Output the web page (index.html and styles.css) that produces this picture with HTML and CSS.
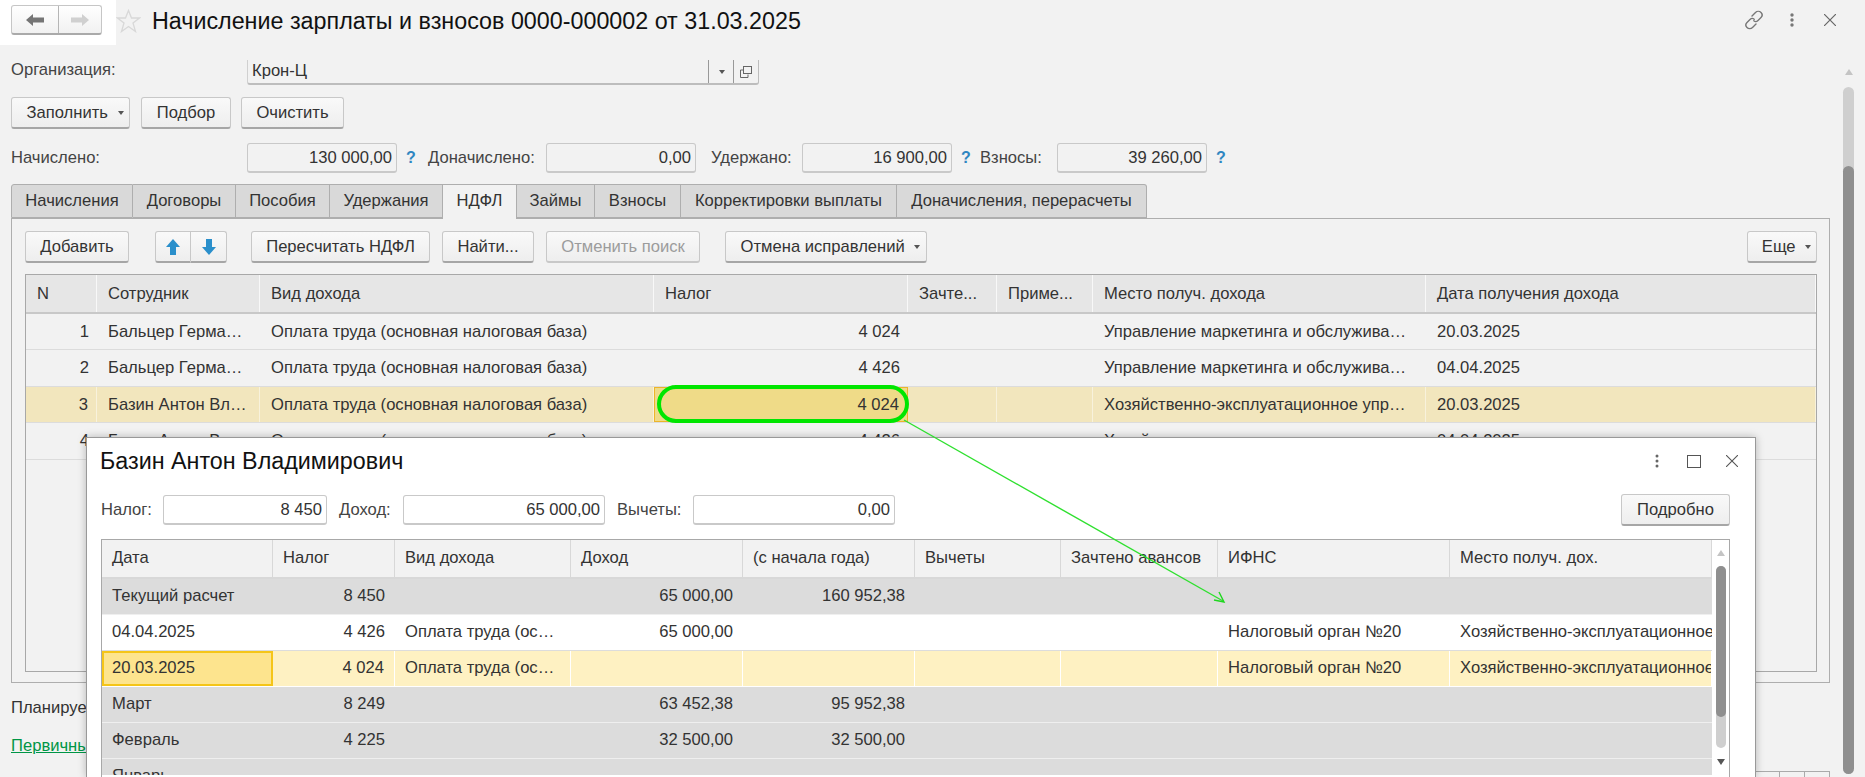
FILE: index.html
```html
<!DOCTYPE html>
<html>
<head>
    <meta charset="UTF-8">
    <title>Начисление зарплаты и взносов</title>
    <link rel="stylesheet" href="styles.css">
</head>
<body>
<div class="page">
    <div class="main">
        <div class="title-bar">
            <div class="nav-box">
                <div class="nav-buttons">
                    <div class="nav-btn">
                        <svg width="18" height="12" viewBox="0 0 18 12"><path d="M0 6 7 0V3.500H18V8.500H7V12Z" fill="#757575"/></svg>
                    </div>
                    <div class="nav-btn nav-next">
                        <svg width="18" height="12" viewBox="0 0 18 12"><path d="M18 6 11 0V3.500H0V8.500H11V12Z" fill="#d0d0d0"/></svg>
                    </div>
                </div>
            </div>
            <svg class="star" width="25" height="24" viewBox="0 0 25 24"><path d="M12.500 1.500 15.500 9H23.500L17 14 19.500 22.500 12.500 17.500 5.500 22.500 8 14 1.500 9H9.500Z" fill="none" stroke="#d8d8d8" stroke-width="1.300"/></svg>
            <h1 class="doc-title">Начисление зарплаты и взносов 0000-000002 от 31.03.2025</h1>
            <div class="title-icons">
                <svg width="20" height="20" viewBox="0 0 20 20" fill="none" stroke="#777" stroke-width="1.400" stroke-linecap="round"><path d="M8 6 11.500 2.500C13 1 15.500 1 17 2.500S18.500 6 17 7.500L14 10.500C12.800 11.700 11 11.800 9.800 10.800"/><path d="M12 14 8.500 17.500C7 19 4.500 19 3 17.500S1.500 14 3 12.500L6 9.500C7.200 8.300 9 8.200 10.200 9.200"/></svg>
                <svg class="icon-dots" width="4" height="14" viewBox="0 0 4 14" fill="#777"><circle cx="2" cy="2" r="1.700"/><circle cx="2" cy="7" r="1.700"/><circle cx="2" cy="12" r="1.700"/></svg>
                <svg class="icon-close" width="12" height="12" viewBox="0 0 12 12" stroke="#666" stroke-width="1.200"><path d="M0 0 12 12M12 0 0 12"/></svg>
            </div>
        </div>

        <div class="content">
            <div class="org-row">
                <label class="org-label">Организация:</label>
                <div class="org-field">
                    <span class="org-value">Крон-Ц</span>
                    <span class="org-btn"><i class="caret"></i></span>
                    <span class="org-btn">
                        <svg width="12" height="12" viewBox="0 0 12 12" fill="none" stroke="#666"><rect x="3.500" y="0.500" width="8" height="7"/><path d="M3 4H0.500V11.500H8V8.500"/></svg>
                    </span>
                </div>
            </div>

            <div class="btn-row">
                <button class="btn btn-menu btn-fill">Заполнить <i class="caret"></i></button>
                <button class="btn btn-pick">Подбор</button>
                <button class="btn btn-clear">Очистить</button>
            </div>

            <div class="sum-row">
                <label class="sum-first">Начислено:</label>
                <div class="field sum-field">130 000,00</div>
                <span class="help">?</span>
                <label class="sum-extra">Доначислено:</label>
                <div class="field sum-field">0,00</div>
                <label class="sum-held">Удержано:</label>
                <div class="field sum-field">16 900,00</div>
                <span class="help">?</span>
                <label class="sum-fee">Взносы:</label>
                <div class="field sum-field">39 260,00</div>
                <span class="help">?</span>
            </div>

            <div class="tabs">
                <div class="tab tab-1">Начисления</div>
                <div class="tab tab-2">Договоры</div>
                <div class="tab tab-3">Пособия</div>
                <div class="tab tab-4">Удержания</div>
                <div class="tab tab-5 active">НДФЛ</div>
                <div class="tab tab-6">Займы</div>
                <div class="tab tab-7">Взносы</div>
                <div class="tab tab-8">Корректировки выплаты</div>
                <div class="tab tab-9">Доначисления, перерасчеты</div>
            </div>

            <div class="panel">
                <div class="toolbar">
                    <button class="btn tb-add">Добавить</button>
                    <div class="arrow-group">
                        <button class="btn arrow-btn">
                            <svg width="14" height="16" viewBox="0 0 14 16"><path d="M7 0 14 8H10V16H4V8H0Z" fill="#2a8fcb"/></svg>
                        </button>
                        <button class="btn arrow-btn">
                            <svg width="14" height="16" viewBox="0 0 14 16"><path d="M7 16 14 8H10V0H4V8H0Z" fill="#2a8fcb"/></svg>
                        </button>
                    </div>
                    <button class="btn tb-recalc">Пересчитать НДФЛ</button>
                    <button class="btn tb-find">Найти...</button>
                    <button class="btn tb-cancel" disabled>Отменить поиск</button>
                    <button class="btn btn-menu tb-fix">Отмена исправлений <i class="caret"></i></button>
                    <button class="btn btn-menu tb-more">Еще <i class="caret"></i></button>
                </div>

                <div class="grid main-grid">
                    <div class="grid-row grid-head">
                        <div class="cell">N</div>
                        <div class="cell">Сотрудник</div>
                        <div class="cell">Вид дохода</div>
                        <div class="cell">Налог</div>
                        <div class="cell">Зачте...</div>
                        <div class="cell">Приме...</div>
                        <div class="cell">Место получ. дохода</div>
                        <div class="cell">Дата получения дохода</div>
                    </div>
                    <div class="grid-row">
                        <div class="cell num">1</div>
                        <div class="cell">Бальцер Герман Иванович</div>
                        <div class="cell">Оплата труда (основная налоговая база)</div>
                        <div class="cell num">4 024</div>
                        <div class="cell"></div>
                        <div class="cell"></div>
                        <div class="cell">Управление маркетинга и обслуживания клиентов</div>
                        <div class="cell">20.03.2025</div>
                    </div>
                    <div class="grid-row">
                        <div class="cell num">2</div>
                        <div class="cell">Бальцер Герман Иванович</div>
                        <div class="cell">Оплата труда (основная налоговая база)</div>
                        <div class="cell num">4 426</div>
                        <div class="cell"></div>
                        <div class="cell"></div>
                        <div class="cell">Управление маркетинга и обслуживания клиентов</div>
                        <div class="cell">04.04.2025</div>
                    </div>
                    <div class="grid-row row-current">
                        <div class="cell num">3</div>
                        <div class="cell">Базин Антон Владимирович</div>
                        <div class="cell">Оплата труда (основная налоговая база)</div>
                        <div class="cell num cell-current">4 024</div>
                        <div class="cell"></div>
                        <div class="cell"></div>
                        <div class="cell">Хозяйственно-эксплуатационное управление</div>
                        <div class="cell">20.03.2025</div>
                    </div>
                    <div class="grid-row">
                        <div class="cell num">4</div>
                        <div class="cell">Базин Антон Владимирович</div>
                        <div class="cell">Оплата труда (основная налоговая база)</div>
                        <div class="cell num">4 426</div>
                        <div class="cell"></div>
                        <div class="cell"></div>
                        <div class="cell">Хозяйственно-эксплуатационное управление</div>
                        <div class="cell">04.04.2025</div>
                    </div>
                </div>
            </div>

            <div class="planned">Планируемая дата выплаты</div>
            <a class="docs-link" href="#">Первичные документы</a>
            <div class="pager"><span></span><span></span><span></span></div>
        </div>
    </div>

    <div class="page-scroll">
        <i class="scroll-up"></i>
        <div class="page-track"><div class="page-thumb"></div></div>
    </div>
</div>

<div class="highlight"></div>

<div class="dialog">
    <div class="dialog-head">
        <div class="dialog-title">Базин Антон Владимирович</div>
        <div class="dialog-icons">
            <svg width="4" height="14" viewBox="0 0 4 14" fill="#666"><circle cx="2" cy="2" r="1.500"/><circle cx="2" cy="7" r="1.500"/><circle cx="2" cy="12" r="1.500"/></svg>
            <svg class="icon-max" width="14" height="13" viewBox="0 0 14 13" fill="none" stroke="#555"><rect x="0.500" y="0.500" width="13" height="12"/></svg>
            <svg class="icon-x" width="12" height="12" viewBox="0 0 12 12" stroke="#555" stroke-width="1.100"><path d="M0 0 12 12M12 0 0 12"/></svg>
        </div>
    </div>
    <div class="dialog-sums">
        <label class="d-tax">Налог:</label>
        <div class="field d-field-1">8 450</div>
        <label class="d-income">Доход:</label>
        <div class="field d-field-2">65 000,00</div>
        <label class="d-deduct">Вычеты:</label>
        <div class="field d-field-3">0,00</div>
        <button class="btn d-more">Подробно</button>
    </div>

    <div class="d-grid-wrap">
        <div class="grid d-grid">
            <div class="grid-row grid-head">
                <div class="cell">Дата</div>
                <div class="cell">Налог</div>
                <div class="cell">Вид дохода</div>
                <div class="cell">Доход</div>
                <div class="cell">(с начала года)</div>
                <div class="cell">Вычеты</div>
                <div class="cell">Зачтено авансов</div>
                <div class="cell">ИФНС</div>
                <div class="cell">Место получ. дох.</div>
            </div>
            <div class="grid-row row-group">
                <div class="cell">Текущий расчет</div>
                <div class="cell num">8 450</div>
                <div class="cell"></div>
                <div class="cell num">65 000,00</div>
                <div class="cell num">160 952,38</div>
                <div class="cell"></div><div class="cell"></div><div class="cell"></div><div class="cell"></div>
            </div>
            <div class="grid-row row-white">
                <div class="cell">04.04.2025</div>
                <div class="cell num">4 426</div>
                <div class="cell">Оплата труда (основная налоговая база)</div>
                <div class="cell num">65 000,00</div>
                <div class="cell"></div><div class="cell"></div><div class="cell"></div>
                <div class="cell">Налоговый орган №20</div>
                <div class="cell clip">Хозяйственно-эксплуатационное управление</div>
            </div>
            <div class="grid-row row-picked">
                <div class="cell cell-picked">20.03.2025</div>
                <div class="cell num">4 024</div>
                <div class="cell">Оплата труда (основная налоговая база)</div>
                <div class="cell"></div><div class="cell"></div><div class="cell"></div><div class="cell"></div>
                <div class="cell">Налоговый орган №20</div>
                <div class="cell clip">Хозяйственно-эксплуатационное управление</div>
            </div>
            <div class="grid-row row-group">
                <div class="cell">Март</div>
                <div class="cell num">8 249</div>
                <div class="cell"></div>
                <div class="cell num">63 452,38</div>
                <div class="cell num">95 952,38</div>
                <div class="cell"></div><div class="cell"></div><div class="cell"></div><div class="cell"></div>
            </div>
            <div class="grid-row row-group">
                <div class="cell">Февраль</div>
                <div class="cell num">4 225</div>
                <div class="cell"></div>
                <div class="cell num">32 500,00</div>
                <div class="cell num">32 500,00</div>
                <div class="cell"></div><div class="cell"></div><div class="cell"></div><div class="cell"></div>
            </div>
            <div class="grid-row row-group">
                <div class="cell">Январь</div>
                <div class="cell"></div><div class="cell"></div><div class="cell"></div><div class="cell"></div>
                <div class="cell"></div><div class="cell"></div><div class="cell"></div><div class="cell"></div>
            </div>
        </div>
        <div class="d-scroll">
            <i class="scroll-up"></i>
            <div class="d-track"><div class="d-thumb"></div></div>
            <i class="scroll-down"></i>
        </div>
    </div>
</div>

<svg class="pointer" width="1865" height="777" viewBox="0 0 1865 777">
    <path d="M904 420 1223 601" stroke="#2fe02f" stroke-width="1.400" fill="none"/>
    <path d="M1214 600 1224 602 1219 592" stroke="#1fd61f" stroke-width="1.400" fill="none"/>
</svg>
</body>
</html>
```

FILE: styles.css
```css
html, body {
    margin: 0;
    height: 777px;
    overflow: hidden;
}
body {
    position: relative;
    background-color: #f2f2f2;
    font-family: "Liberation Sans", Arial, sans-serif;
    font-size: 16.6px;
    color: #333;
}
label {
    color: #444;
}
.page {
    display: flex;
    height: 777px;
    width: 1865px;
    overflow: hidden;
}
.main {
    width: 1843px;
    flex: none;
}

/* title */
.title-bar {
    display: flex;
    height: 45px;
}
.nav-box {
    width: 105px;
    padding: 5px 0 0 11px;
    height: 40px;
    background-color: #fff;
}
.nav-buttons {
    display: flex;
    width: 91px;
    height: 30px;
    box-sizing: border-box;
    border: 1px solid #c6c6c6;
    border-bottom: 2px solid #aaa;
    border-radius: 3px;
    background: linear-gradient(#fff, #f1f1f1);
}
.nav-btn {
    width: 46px;
    display: flex;
    align-items: center;
    justify-content: center;
    border-right: 1px solid #b5b5b5;
}
.nav-next {
    flex: 1;
    border-right: none;
}
.star {
    margin: 9px 0 0 0;
}
.doc-title {
    margin: 8px 0 0 11px;
    font-size: 23.3px;
    line-height: 26px;
    font-weight: normal;
    color: #111;
}
.title-icons {
    margin-left: auto;
    padding-right: 7px;
    display: flex;
    align-items: center;
    height: 40px;
}
.icon-dots {
    margin-left: 26px;
}
.icon-close {
    margin-left: 30px;
}

.content {
    padding: 0 13px 0 11px;
}

/* organization */
.org-row {
    display: flex;
    margin-top: 15px;
    height: 25px;
}
.org-label {
    width: 236px;
    line-height: 19px;
}
.org-field {
    width: 512px;
    display: flex;
    box-sizing: border-box;
    border-left: 1px solid #d0d0d0;
    border-right: 1px solid #bdbdbd;
    border-bottom: 2px solid #bdbdbd;
    border-radius: 0 0 3px 3px;
    line-height: 21px;
}
.org-value {
    flex: 1;
    padding-left: 4px;
}
.org-btn {
    width: 24px;
    display: flex;
    align-items: center;
    justify-content: center;
    border-left: 1px solid #999;
}
.caret {
    display: inline-block;
    width: 0;
    height: 0;
    border: 3px solid transparent;
    border-top: 4px solid #555;
    border-bottom: none;
    vertical-align: middle;
    margin-left: 2px;
}

/* buttons */
.btn {
    height: 32px;
    padding: 0;
    box-sizing: border-box;
    border: 1px solid #c8c8c8;
    border-bottom: 2px solid #a6a6a6;
    border-radius: 3px;
    background: linear-gradient(#f9f9f9, #eeeeee);
    font-family: inherit;
    font-size: 16.6px;
    color: #333;
}
.btn:disabled {
    color: #9c9c9c;
    border-bottom-color: #c8c8c8;
}
.btn-menu {
    padding-left: 9px;
}
.btn-menu .caret {
    margin-left: 5px;
}
.btn-row {
    display: flex;
    margin-top: 12px;
}
.btn-fill {
    width: 119px;
}
.btn-pick {
    width: 90px;
    margin-left: 11px;
}
.btn-clear {
    width: 103px;
    margin-left: 10px;
}

/* totals */
.sum-row {
    display: flex;
    align-items: center;
    margin-top: 14px;
    height: 30px;
}
.field {
    height: 30px;
    box-sizing: border-box;
    border: 1px solid #c9c9c9;
    border-bottom-width: 2px;
    border-radius: 3px;
    padding-right: 4px;
    text-align: right;
    line-height: 27px;
}
.sum-field {
    width: 150px;
}
.help {
    color: #2f86c1;
    font-weight: bold;
    font-size: 16px;
    margin-left: 9px;
    width: 9px;
}
.sum-first {
    width: 236px;
}
.sum-extra {
    width: 118px;
    margin-left: 13px;
}
.sum-held {
    width: 91px;
    margin-left: 15px;
}
.sum-fee {
    width: 77px;
    margin-left: 10px;
}

/* tabs */
.tabs {
    display: flex;
    margin-top: 11px;
    height: 34px;
    position: relative;
}
.tab {
    box-sizing: border-box;
    height: 34px;
    border: 1px solid #aeaeae;
    border-left: none;
    background-color: #d9d9d9;
    text-align: center;
    line-height: 32px;
    white-space: nowrap;
}
.tab:first-child {
    border-left: 1px solid #aeaeae;
    border-top-left-radius: 3px;
}
.tab:last-child {
    border-top-right-radius: 3px;
}
.tab.active {
    background-color: #f2f2f2;
    border-bottom: none;
    height: 35px;
    position: relative;
    z-index: 1;
}
.tab-1 { width: 122px; }
.tab-2 { width: 103px; }
.tab-3 { width: 94px; }
.tab-4 { width: 113px; }
.tab-5 { width: 74px; }
.tab-6 { width: 78px; }
.tab-7 { width: 86px; }
.tab-8 { width: 216px; }
.tab-9 { width: 250px; }

/* panel */
.panel {
    height: 465px;
    box-sizing: border-box;
    border: 1px solid #aeaeae;
    padding: 12px 12px 0 13px;
}
.toolbar {
    display: flex;
    gap: 12px;
}
.tb-add { width: 104px; }
.arrow-group {
    display: flex;
    margin: 0 12px 0 14px;
}
.arrow-btn {
    width: 36px;
    display: flex;
    align-items: center;
    justify-content: center;
    border-radius: 3px 0 0 3px;
}
.arrow-btn + .arrow-btn {
    border-left: none;
    border-radius: 0 3px 3px 0;
}
.tb-recalc { width: 179px; }
.tb-find { width: 92px; }
.tb-cancel { width: 154px; }
.tb-fix {
    width: 202px;
    margin-left: 13px;
}
.tb-more {
    width: 70px;
    margin-left: auto;
}

/* grids */
.grid {
    box-sizing: border-box;
    border: 1px solid #a8a8a8;
    border-bottom: none;
}
.main-grid {
    margin-top: 11px;
    height: 398px;
    width: 1792px;
    border-bottom: 1px solid #a8a8a8;
}
.grid-row {
    display: grid;
    height: 36px;
    box-sizing: border-box;
    border-bottom: 1px solid #dcdcdc;
}
.main-grid .grid-row {
    grid-template-columns: 71px 163px 394px 254px 89px 96px 333px 390px;
    height: 36.4px;
}
.grid-head {
    height: 39px;
    background-color: #e6e6e6;
    border-bottom: 2px solid #c8c8c8;
}
.main-grid .grid-head {
    height: 39px;
}
.cell {
    padding: 0 11px;
    line-height: 35px;
    white-space: nowrap;
    overflow: hidden;
    text-overflow: ellipsis;
    box-sizing: border-box;
}
.cell.num {
    text-align: right;
}
.grid-head .cell {
    line-height: 37px;
    border-right: 1px solid #f8f8f8;
}
.row-current {
    background-color: #f2e6bd;
}
.row-current .cell {
    border-right: 1px solid #f8f2dc;
}
.main-grid .num {
    padding-right: 8px;
}
.row-current .cell-current {
    background-color: #efdb88;
    outline: 1px solid #edb52a;
    outline-offset: -1px;
}

/* below the panel */
.planned {
    margin-top: 16px;
    line-height: 18px;
}
.docs-link {
    display: block;
    margin-top: 20px;
    color: #009646;
    line-height: 18px;
}
.pager {
    display: flex;
    justify-content: flex-end;
    margin-top: 16px;
}
.pager span {
    width: 25px;
    height: 12px;
    box-sizing: border-box;
    border: 1px solid #aaa;
    border-left: none;
}

/* page scrollbar */
.page-scroll {
    width: 11px;
    padding-top: 69px;
}
.scroll-up, .scroll-down {
    display: block;
    width: 0;
    height: 0;
    margin: 0 auto;
    border: 4px solid transparent;
    border-bottom: 6px solid #c4c4c4;
    border-top: none;
}
.scroll-down {
    border-top: 6px solid #555;
    border-bottom: none;
}
.page-track {
    margin-top: 12px;
    height: 687px;
    background-color: #cfcfcf;
    border-radius: 6px;
    padding-top: 79px;
    box-sizing: border-box;
}
.page-thumb {
    height: 608px;
    background-color: #8f8f8f;
    border-radius: 6px;
}

/* annotation over the grid */
.highlight {
    position: absolute;
    left: 657px;
    top: 385px;
    width: 252px;
    height: 38px;
    box-sizing: border-box;
    border: 4px solid #00e600;
    border-radius: 19px;
}
.pointer {
    position: absolute;
    left: 0;
    top: 0;
    pointer-events: none;
}

/* dialog */
.dialog {
    position: absolute;
    left: 86px;
    top: 437px;
    width: 1670px;
    height: 340px;
    box-sizing: border-box;
    background-color: #fff;
    border: 1px solid #999;
    border-bottom: none;
    box-shadow: 0 0 8px rgba(0, 0, 0, 0.25);
    padding: 0 25px 0 14px;
}
.dialog-head {
    display: flex;
    align-items: center;
    height: 46px;
}
.dialog-title {
    margin-left: -1px;
    font-size: 23.3px;
    color: #111;
}
.dialog-icons {
    margin-left: auto;
    margin-right: -8px;
    display: flex;
    align-items: center;
}
.icon-max {
    margin-left: 28px;
}
.icon-x {
    margin-left: 25px;
}
.dialog-sums {
    display: flex;
    align-items: center;
    margin-top: 10px;
    height: 32px;
}
.dialog-sums .field {
    background-color: #fff;
}
.d-tax { width: 62px; }
.d-field-1 { width: 164px; }
.d-income { width: 64px; margin-left: 12px; }
.d-field-2 { width: 202px; }
.d-deduct { width: 76px; margin-left: 12px; }
.d-field-3 { width: 202px; }
.d-more {
    width: 109px;
    margin-left: auto;
}
.d-grid-wrap {
    position: relative;
    margin-top: 13px;
    width: 1629px;
    height: 238px;
    box-sizing: border-box;
    border: 1px solid #a8a8a8;
    border-bottom: none;
    display: flex;
    overflow: hidden;
}
.d-grid {
    border: none;
    width: 1610px;
    flex: none;
    height: 235px;
    overflow: hidden;
}
.d-grid .grid-row {
    grid-template-columns: 171px 122px 176px 172px 172px 146px 157px 232px 262px;
}
.d-grid .cell {
    padding: 0 13px 0 10px;
    line-height: 34px;
}
.d-grid .grid-head {
    height: 39px;
    background-color: #f2f2f2;
    border-bottom: 2px solid #d8d8d8;
}
.d-grid .grid-head .cell {
    line-height: 35px;
    border-right: 1px solid #d8d8d8;
}
.d-grid .num {
    padding-right: 10px;
}
.row-group {
    background-color: #dcdcdc;
    border-bottom: 1px solid #efefef;
}
.row-white {
    background-color: #fff;
    border-bottom: 1px solid #dcdcdc;
}
.row-picked {
    background-color: #fef1c2;
    border-bottom: 1px solid #fff;
}
.row-picked .cell {
    border-right: 1px solid #fff;
}
.d-grid .row-picked .cell-picked {
    background-color: #fde48e;
    border: 2px solid #f5c518;
    padding-left: 8px;
    line-height: 30px;
}
.d-grid .cell.clip {
    padding-right: 0;
    text-overflow: clip;
}
.d-scroll {
    flex: 1;
    padding-top: 10px;
    background-color: #fff;
}
.d-track {
    width: 10px;
    height: 182px;
    margin: 10px auto 0;
    background-color: #cfcfcf;
    border-radius: 5px;
}
.d-thumb {
    height: 151px;
    background-color: #8f8f8f;
    border-radius: 5px;
}
.d-scroll .scroll-down {
    margin-top: 11px;
}
```
